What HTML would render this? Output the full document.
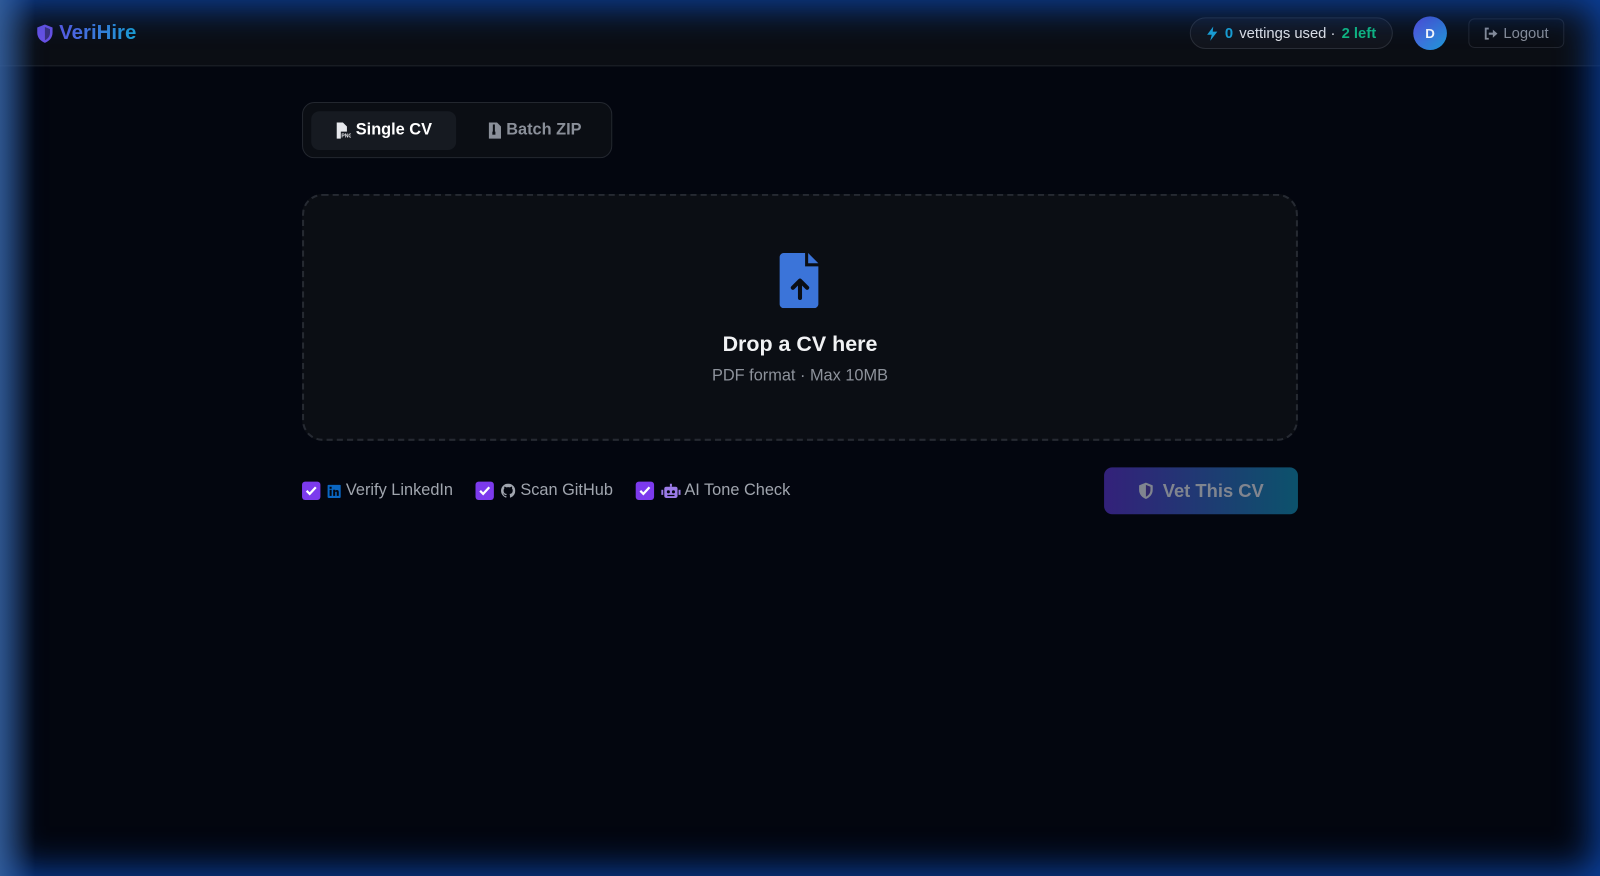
<!DOCTYPE html>
<html><head><meta charset="utf-8"><style>
*{box-sizing:border-box;margin:0;padding:0}
body{width:1600px;height:876px;overflow:hidden;background:#03060f;font-family:"Liberation Sans",sans-serif;position:relative;color:#e6e8ec}
.wrap{position:absolute;left:0;top:0;width:1568px;height:858px;transform:scale(1.0204);transform-origin:0 0}
.hdr{position:absolute;left:0;top:0;width:1568px;height:65px;background:#0b0e14;border-bottom:1px solid #1e222a}
.logo{position:absolute;left:35px;top:21px;display:flex;align-items:center;gap:5px;font-weight:700;font-size:20px}
.logo span{background:linear-gradient(90deg,#5b5ce6,#1aa3d6);-webkit-background-clip:text;color:transparent}
.pill{position:absolute;left:1166px;top:17px;width:199px;height:31px;border:1px solid #2a2e36;border-radius:16px;background:#12151c;font-size:14.5px;display:flex;align-items:center;justify-content:center;gap:6px;color:#e3e5e9}
.av{position:absolute;left:1385px;top:16px;width:33px;height:33px;border-radius:50%;background:linear-gradient(135deg,#5b4ee0,#1c9ad6);color:#fff;font-weight:700;font-size:13px;display:flex;align-items:center;justify-content:center}
.lo{position:absolute;left:1439px;top:18px;width:94px;height:29px;border:1px solid #22262e;border-radius:6px;color:#8a8f99;font-size:14.5px;display:flex;align-items:center;justify-content:center;gap:5px}
.tabs{position:absolute;left:296px;top:100px;width:304px;height:55px;border:1px solid #23272f;border-radius:12px;background:#0b0e14}
.t{position:absolute;top:8px;height:38px;display:flex;align-items:center;gap:5px;font-size:16px;font-weight:700}
.t1{left:8px;width:142px;background:#161a21;border-radius:8px;justify-content:center;color:#fff}
.t2{left:160px;width:135px;justify-content:center;color:#8a8f99}
.drop{position:absolute;left:296px;top:190px;width:976px;height:242px;border:2px dashed #262a32;border-radius:20px;background:#0b0e14;text-align:center}
.drop h2{position:absolute;top:134px;width:100%;font-size:21px;color:#f1f2f4}
.drop p{position:absolute;top:168px;width:100%;font-size:16px;color:#8d929b}
.opts{position:absolute;left:296px;top:472px;display:flex;align-items:center;font-size:16px;color:#a0a5ae}
.cb{width:18px;height:18px;background:#7c3aed;border-radius:3px;display:inline-flex;align-items:center;justify-content:center;margin-right:7px}
.btn{position:absolute;left:1082px;top:458px;width:190px;height:46px;border-radius:8px;background:linear-gradient(90deg,#33217a,#0c526c);color:#80858f;font-weight:700;font-size:18px;display:flex;align-items:center;justify-content:center;gap:8px}
.glow{position:absolute;inset:0;pointer-events:none;box-shadow:inset 0 0 36px 6px rgba(12,70,170,.95)}
.glowl{position:absolute;left:0;top:0;width:35px;height:876px;background:linear-gradient(90deg,rgba(70,110,160,.6),rgba(40,70,120,0));pointer-events:none}
</style></head><body>
<div class="wrap">
<div class="hdr">
<div class="logo"><svg width="18" height="20" viewBox="0 0 18 20"><path d="M9 1 L16.5 4 V9 C16.5 14 13 17.5 9 19 C5 17.5 1.5 14 1.5 9 V4 Z" fill="#6a52e6"/><path d="M9 3.5 V16.5 C12 15 14 12.5 14 9 V5.5 Z" fill="#0b0e14" opacity=".5"/></svg><span>VeriHire</span></div>
<div class="pill"><svg width="12" height="14" viewBox="0 0 12 14"><path d="M7 0 L1 8 H5.5 L4 14 L11 5 H6.5 Z" fill="#1aa3d6"/></svg><b style="color:#1aa3d6">0</b> vettings used · <b style="color:#10b981">2 left</b></div>
<div class="av">D</div>
<div class="lo"><svg width="14" height="12" viewBox="0 0 14 12"><path d="M5 1H2V11H5" stroke="#8a8f99" stroke-width="1.8" fill="none"/><path d="M5 5H9V2L13.5 6L9 10V7H5Z" fill="#8a8f99"/></svg>Logout</div>
</div>
<div class="tabs">
<div class="t t1"><svg width="15" height="16" viewBox="0 0 15 16"><path d="M1 0H7L11 4V9H5V16H1Z" fill="#e6e8ec"/><text x="5.5" y="15" font-size="5" fill="#e6e8ec" font-family="Liberation Sans">PNG</text></svg>Single CV</div>
<div class="t t2"><svg width="12" height="16" viewBox="0 0 12 16"><path d="M0 0H8L12 4V16H0Z" fill="#8a8f99"/><rect x="4" y="2" width="2" height="8" fill="#0b0e14"/><rect x="3.5" y="9" width="3" height="3" fill="#0b0e14"/></svg>Batch ZIP</div>
</div>
<div class="drop">
<svg style="position:absolute;left:466px;top:56px" width="40" height="54" viewBox="0 0 40 54"><path d="M4 0H25V13H38V50C38 52 36 54 34 54H4C2 54 0 52 0 50V4C0 2 2 0 4 0Z" fill="#3b74d9"/><path d="M28 0L38 10H28Z" fill="#3b74d9"/><path d="M20 44V28M13 34L20 27L27 34" stroke="#0b0e14" stroke-width="4" fill="none" stroke-linecap="round" stroke-linejoin="round"/></svg>
<h2>Drop a CV here</h2>
<p>PDF format · Max 10MB</p>
</div>
<div class="opts">
<span class="cb"><svg width="12" height="10" viewBox="0 0 12 10"><path d="M1.5 5L4.5 8L10.5 1.5" stroke="#fff" stroke-width="2.2" fill="none"/></svg></span>
<svg width="13" height="13" viewBox="0 0 13 13" style="margin-right:5px"><rect width="13" height="13" rx="1" fill="#0a66c2"/><rect x="2" y="5" width="2" height="6" fill="#03060f"/><rect x="2" y="2" width="2" height="2" fill="#03060f"/><path d="M5.5 5H7.5V6C8 5 11 4.5 11 7V11H9V7.5C9 6.5 7.5 6.5 7.5 7.5V11H5.5Z" fill="#03060f"/></svg>Verify LinkedIn
<span class="cb" style="margin-left:22px"><svg width="12" height="10" viewBox="0 0 12 10"><path d="M1.5 5L4.5 8L10.5 1.5" stroke="#fff" stroke-width="2.2" fill="none"/></svg></span>
<svg width="14" height="14" viewBox="0 0 16 16" style="margin-right:5px"><path fill="#a0a5ae" d="M8 0C3.58 0 0 3.58 0 8c0 3.540 2.290 6.530 5.470 7.590.4.07.55-.17.55-.38v-1.33c-2.23.49-2.7-1.070-2.7-1.070-.36-.93-.89-1.170-.89-1.170-.73-.5.05-.49.05-.49.8.06 1.230.83 1.230.83.71 1.230 1.870.87 2.330.66.07-.52.28-.87.51-1.070-1.780-.2-3.640-.89-3.640-3.950 0-.87.31-1.590.82-2.150-.08-.2-.36-1.020.08-2.120 0 0 .67-.21 2.2.82a7.6 7.6 0 0 1 4 0c1.530-1.040 2.2-.82 2.2-.82.44 1.1.16 1.920.08 2.120.51.56.82 1.270.82 2.150 0 3.070-1.870 3.750-3.650 3.950.29.25.54.73.54 1.480v2.2c0 .21.15.46.55.38A8 8 0 0 0 16 8c0-4.420-3.580-8-8-8z"/></svg>Scan GitHub
<span class="cb" style="margin-left:22px"><svg width="12" height="10" viewBox="0 0 12 10"><path d="M1.5 5L4.5 8L10.5 1.5" stroke="#fff" stroke-width="2.2" fill="none"/></svg></span>
<svg width="19" height="15" viewBox="0 0 19 15" style="margin-right:4px"><rect x="8.5" y="0" width="2" height="3" fill="#9b7be8"/><rect x="3" y="3" width="13" height="11" rx="2" fill="#9b7be8"/><rect x="0" y="6" width="2" height="5" fill="#9b7be8"/><rect x="17" y="6" width="2" height="5" fill="#9b7be8"/><circle cx="7" cy="8" r="1.5" fill="#03060f"/><circle cx="12" cy="8" r="1.5" fill="#03060f"/><rect x="6" y="11" width="7" height="1.2" fill="#03060f"/></svg>AI Tone Check
</div>
<div class="btn"><svg width="16" height="18" viewBox="0 0 18 20"><path d="M9 1 L16.5 4 V9 C16.5 14 13 17.5 9 19 C5 17.5 1.5 14 1.5 9 V4 Z" fill="#80858f"/><path d="M9 3.5 V16.5 C12 15 14 12.5 14 9 V5.5 Z" fill="#30286a"/></svg>Vet This CV</div>
</div>
<div class="glow"></div><div class="glowl"></div>
</body></html>
